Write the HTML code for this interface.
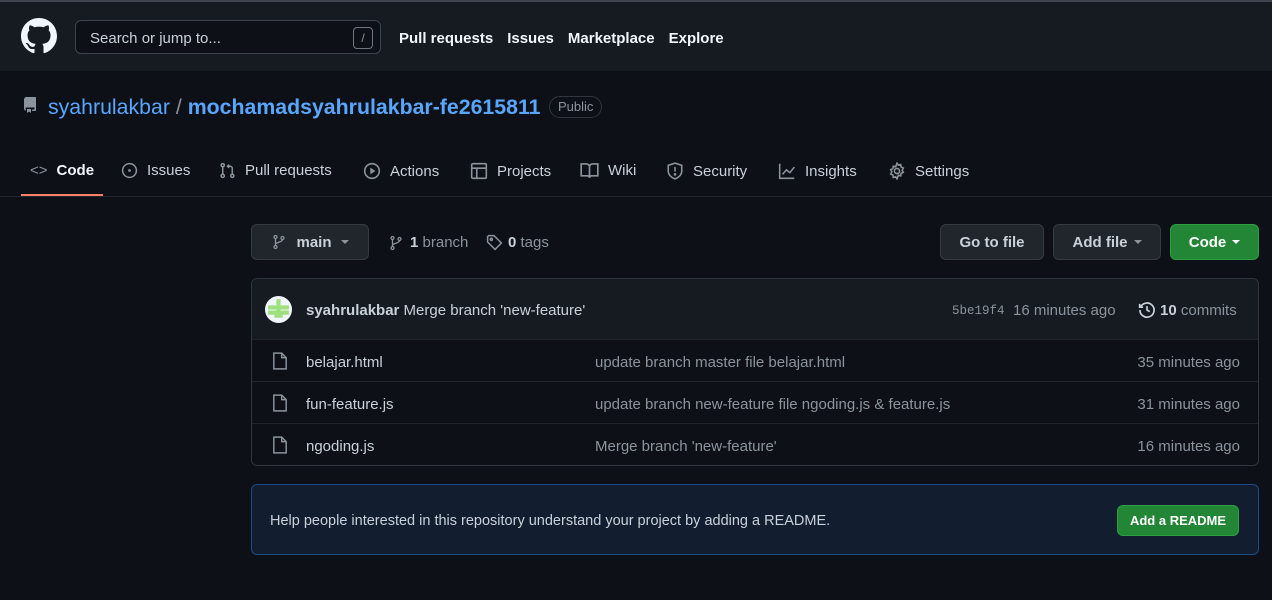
<!DOCTYPE html>
<html><head><meta charset="utf-8"><style>
*{box-sizing:border-box;margin:0;padding:0}
body{width:1272px;height:600px;background:#0d1117;color:#c9d1d9;font-family:"Liberation Sans",sans-serif;font-size:14.5px;position:relative;overflow:hidden}
.a{position:absolute;white-space:nowrap}
svg{display:block}
.hdr{position:absolute;left:0;top:0;width:1272px;height:71px;background:#161b22;border-top:2px solid #3d444d}
.nav b{color:#f0f6fc;margin-right:14px;font-size:15px}
.tab{position:absolute;top:162px;font-size:15px;color:#c9d1d9;display:flex;align-items:center;gap:9px}
.btn{position:absolute;top:224px;height:36px;border:1px solid #363b42;border-radius:6px;background:#21262d;color:#c9d1d9;font-weight:bold;font-size:15px;display:flex;align-items:center;justify-content:center;gap:6px}
.caret{width:0;height:0;border-left:4px solid transparent;border-right:4px solid transparent;border-top:4px solid currentColor}
.row{position:absolute;left:252px;width:1006px;height:42px;border-top:1px solid #21262d;font-size:15px}
.muted{color:#8b949e}
.t{top:2px}
</style></head><body>
<div class="hdr">
<svg class="a" style="left:21px;top:16px" width="36" height="36" viewBox="0 0 16 16"><path fill="#f0f6fc" d="M8 0C3.58 0 0 3.58 0 8c0 3.54 2.29 6.530 5.47 7.59.4.07.55-.17.55-.38 0-.19-.01-.82-.01-1.49-2.01.37-2.53-.49-2.690-.94-.09-.23-.48-.94-.82-1.13-.28-.15-.68-.52-.01-.53.63-.01 1.08.58 1.23.82.72 1.21 1.87.87 2.33.66.07-.52.28-.87.51-1.07-1.78-.2-3.64-.89-3.64-3.95 0-.87.31-1.59.82-2.15-.08-.2-.36-1.02.08-2.12 0 0 .67-.21 2.2.82.64-.18 1.32-.27 2-.27.68 0 1.36.09 2 .27 1.53-1.04 2.2-.82 2.2-.82.44 1.1.16 1.92.08 2.12.51.56.82 1.27.82 2.15 0 3.07-1.87 3.75-3.65 3.95.29.25.54.73.54 1.48 0 1.07-.01 1.93-.01 2.2 0 .21.15.46.55.38A8.013 8.013 0 0016 8c0-4.42-3.58-8-8-8z"/></svg>
<div class="a" style="left:75px;top:18px;width:306px;height:34px;border:1px solid #3d444d;border-radius:6px;background:#0d1117"></div>
<div class="a" style="left:90px;top:28px;color:#c9d1d9;font-size:15px">Search or jump to...</div>
<div class="a" style="left:353px;top:25px;width:20px;height:22px;border:1px solid #6e7681;border-radius:4px;color:#8b949e;font-size:12px;text-align:center;line-height:20px">/</div>
<div class="a nav" style="left:399px;top:28px"><b>Pull requests</b><b>Issues</b><b>Marketplace</b><b>Explore</b></div>
</div>
<svg class="a" style="left:22px;top:97px" width="16" height="16" viewBox="0 0 16 16"><path fill="#8b949e" d="M2 2.5A2.5 2.5 0 014.5 0h8.75a.75.75 0 01.75.75v12.5a.75.75 0 01-.75.75h-2.5a.75.75 0 110-1.5h1.75v-2h-8a1 1 0 00-.714 1.7.75.75 0 01-1.072 1.05A2.495 2.495 0 012 11.5v-9zm10.5-1V9h-8c-.356 0-.694.074-1 .208V2.5a1 1 0 011-1h8zM5 12.25v3.25a.25.25 0 00.4.2l1.45-1.087a.25.25 0 01.3 0L8.6 15.7a.25.25 0 00.4-.2v-3.25a.25.25 0 00-.25-.25h-3.5a.25.25 0 00-.25.25z"/></svg>
<div class="a" style="left:48px;top:95px;font-size:21.3px;color:#58a6ff">syahrulakbar <span style="color:#8b949e">/</span> <b>mochamadsyahrulakbar-fe2615811</b></div>
<div class="a" style="left:549px;top:96px;height:22px;padding:0 8px;border:1px solid #30363d;border-radius:12px;font-size:13px;color:#8b949e;line-height:20px">Public</div>
<div class="tab" style="left:30px"><span style="color:#8b949e">&lt;&gt;</span><b style="color:#f0f6fc">Code</b></div>
<div class="a" style="left:21px;top:194px;width:82px;height:2px;background:#f78166"></div>
<div class="tab" style="left:121px"><svg width="17" height="17" viewBox="0 0 16 16"><circle cx="8" cy="8" r="6.5" fill="none" stroke="#8b949e" stroke-width="1.4"/><circle cx="8" cy="8" r="1.3" fill="#8b949e"/></svg>Issues</div>
<div class="tab" style="left:219px"><svg width="17" height="17" viewBox="0 0 16 16" fill="none" stroke="#8b949e" stroke-width="1.4"><circle cx="3.5" cy="3" r="1.5"/><circle cx="3.5" cy="13" r="1.5"/><circle cx="12.5" cy="13" r="1.5"/><path d="M3.5 4.5v7M12.5 11.5V6a2 2 0 00-2-2H8M9.5 2.5L8 4l1.5 1.5"/></svg>Pull requests</div>
<div class="tab" style="left:363px"><svg width="18" height="18" viewBox="0 0 16 16"><circle cx="8" cy="8" r="6.5" fill="none" stroke="#8b949e" stroke-width="1.4"/><path d="M6.5 5v6l4.5-3z" fill="#8b949e"/></svg>Actions</div>
<div class="tab" style="left:470px"><svg width="18" height="18" viewBox="0 0 16 16" fill="none" stroke="#8b949e" stroke-width="1.4"><rect x="1.5" y="1.5" width="13" height="13" rx="1"/><path d="M1.5 5.5h13M6 5.5v9"/></svg>Projects</div>
<div class="tab" style="left:580px"><svg width="19" height="17" viewBox="0 0 16 14" fill="none" stroke="#8b949e" stroke-width="1.4"><path d="M1 1.5h4.5A2.5 2.5 0 018 4v9a2 2 0 00-2-1.5H1zM15 1.5h-4.5A2.5 2.5 0 008 4v9a2 2 0 012-1.5h5z"/></svg>Wiki</div>
<div class="tab" style="left:666px"><svg width="18" height="18" viewBox="0 0 16 16" fill="none" stroke="#8b949e" stroke-width="1.4"><path d="M8 1l6 2v5c0 3.5-3 6-6 7-3-1-6-3.5-6-7V3z"/><path d="M8 4.5v4"/><circle cx="8" cy="11" r=".5"/></svg>Security</div>
<div class="tab" style="left:778px"><svg width="18" height="18" viewBox="0 0 16 16" fill="none" stroke="#8b949e" stroke-width="1.4"><path d="M1.5 1.5v13h13M4 11l3.5-4 3 2.5 4-5"/></svg>Insights</div>
<div class="tab" style="left:888px"><svg width="18" height="18" viewBox="0 0 16 16" fill="none" stroke="#8b949e" stroke-width="1.4"><circle cx="8" cy="8" r="2.3"/><path d="M8 1l1.2 1.8 2.1-.6.3 2.2 2 .9-1 2 1 1.9-2 .9-.3 2.2-2.1-.6L8 15l-1.2-1.8-2.1.6-.3-2.2-2-.9 1-2-1-1.9 2-.9.3-2.2 2.1.6z"/></svg>Settings</div>
<div class="a" style="left:0;top:196px;width:1272px;height:1px;background:#21262d"></div>

<div class="btn" style="left:251px;width:118px;gap:9px"><svg width="16" height="16" viewBox="0 0 16 16" fill="none" stroke="#8b949e" stroke-width="1.3"><circle cx="4.5" cy="3" r="1.5"/><circle cx="4.5" cy="13" r="1.5"/><circle cx="11.5" cy="4" r="1.5"/><path d="M4.5 4.5v7M11.5 5.5c0 3-7 2.5-7 5"/></svg>main<span class="caret" style="color:#8b949e"></span></div>
<div class="a" style="left:388px;top:234px;display:flex;align-items:center;gap:6px;font-size:15px"><svg width="16" height="16" viewBox="0 0 16 16" fill="none" stroke="#8b949e" stroke-width="1.3"><circle cx="4.5" cy="3" r="1.5"/><circle cx="4.5" cy="13" r="1.5"/><circle cx="11.5" cy="4" r="1.5"/><path d="M4.5 4.5v7M11.5 5.5c0 3-7 2.5-7 5"/></svg><span><b style="color:#c9d1d9">1</b> <span class="muted">branch</span></span></div>
<div class="a" style="left:486px;top:234px;display:flex;align-items:center;gap:5px;font-size:15px"><svg width="17" height="17" viewBox="0 0 16 16" fill="none" stroke="#8b949e" stroke-width="1.4"><path d="M1.5 2.5v5l7 7 6-6-7-7h-5z"/><circle cx="5" cy="5" r="1"/></svg><span><b>0</b> <span class="muted">tags</span></span></div>
<div class="btn" style="left:940px;width:104px">Go to file</div>
<div class="btn" style="left:1053px;width:108px">Add file<span class="caret" style="color:#8b949e"></span></div>
<div class="btn" style="left:1170px;width:89px;background:#238636;border-color:#2ea043;color:#fff">Code<span class="caret"></span></div>

<div class="a" style="left:251px;top:278px;width:1008px;height:188px;border:1px solid #30363d;border-radius:6px"></div>
<div class="a" style="left:252px;top:279px;width:1006px;height:60px;background:#161b22;border-radius:6px 6px 0 0"></div>
<svg class="a" style="left:265px;top:296px" width="27" height="27" viewBox="0 0 26 26"><circle cx="13" cy="13" r="13" fill="#f0f6fc"/><path d="M3 9h20v4H15v1h8v4h-6v3h-8v-3H3v-4h8v-1H3z" fill="#9ee07e"/><rect x="11" y="3" width="4" height="6" fill="#9ee07e"/></svg>
<div class="a" style="left:306px;top:302px;font-size:15px"><b style="color:#c9d1d9">syahrulakbar</b> Merge branch 'new-feature'</div>
<div class="a" style="left:952px;top:304px;font-family:'Liberation Mono',monospace;font-size:12.5px;color:#8b949e">5be19f4</div>
<div class="a muted" style="left:1013px;top:302px;font-size:15px">16 minutes ago</div>
<svg class="a" style="left:1138px;top:301px" width="18" height="18" viewBox="0 0 16 16" fill="none" stroke="#c9d1d9" stroke-width="1.5"><path d="M2.5 5A6.3 6.3 0 111.7 8M1.5 2.5V5.5h3"/><path d="M8 4.5V8l2.5 1.5"/></svg>
<div class="a" style="left:1160px;top:302px;font-size:15px"><b>10</b> <span class="muted">commits</span></div>

<div class="row" style="top:339px"></div><div class="row" style="top:381px"></div><div class="row" style="top:423px"></div>
<svg class="a" style="left:272px;top:352px" width="16" height="18" viewBox="0 0 14 16" fill="none" stroke="#8b949e" stroke-width="1.3"><path d="M1.5 1h7l4 4v10h-11zM8.5 1v4h4"/></svg>
<svg class="a" style="left:272px;top:394px" width="16" height="18" viewBox="0 0 14 16" fill="none" stroke="#8b949e" stroke-width="1.3"><path d="M1.5 1h7l4 4v10h-11zM8.5 1v4h4"/></svg>
<svg class="a" style="left:272px;top:436px" width="16" height="18" viewBox="0 0 14 16" fill="none" stroke="#8b949e" stroke-width="1.3"><path d="M1.5 1h7l4 4v10h-11zM8.5 1v4h4"/></svg>
<div class="a" style="left:306px;top:354px;font-size:15px">belajar.html</div>
<div class="a" style="left:306px;top:396px;font-size:15px">fun-feature.js</div>
<div class="a" style="left:306px;top:438px;font-size:15px">ngoding.js</div>
<div class="a muted" style="left:595px;top:354px;font-size:15px">update branch master file belajar.html</div>
<div class="a muted" style="left:595px;top:396px;font-size:15px">update branch new-feature file ngoding.js &amp; feature.js</div>
<div class="a muted" style="left:595px;top:438px;font-size:15px">Merge branch 'new-feature'</div>
<div class="a muted" style="right:32px;top:354px;font-size:15px">35 minutes ago</div>
<div class="a muted" style="right:32px;top:396px;font-size:15px">31 minutes ago</div>
<div class="a muted" style="right:32px;top:438px;font-size:15px">16 minutes ago</div>

<div class="a" style="left:251px;top:484px;width:1008px;height:71px;border:1px solid #1f4b85;border-radius:6px;background:#121d2f"></div>
<div class="a" style="left:270px;top:513px;font-size:14.5px;color:#c9d1d9">Help people interested in this repository understand your project by adding a README.</div>
<div class="a" style="left:1117px;top:505px;width:122px;height:31px;background:#238636;border:1px solid #2ea043;border-radius:6px;color:#fff;font-weight:bold;font-size:13px;text-align:center;line-height:29px">Add a README</div>
</body></html>
